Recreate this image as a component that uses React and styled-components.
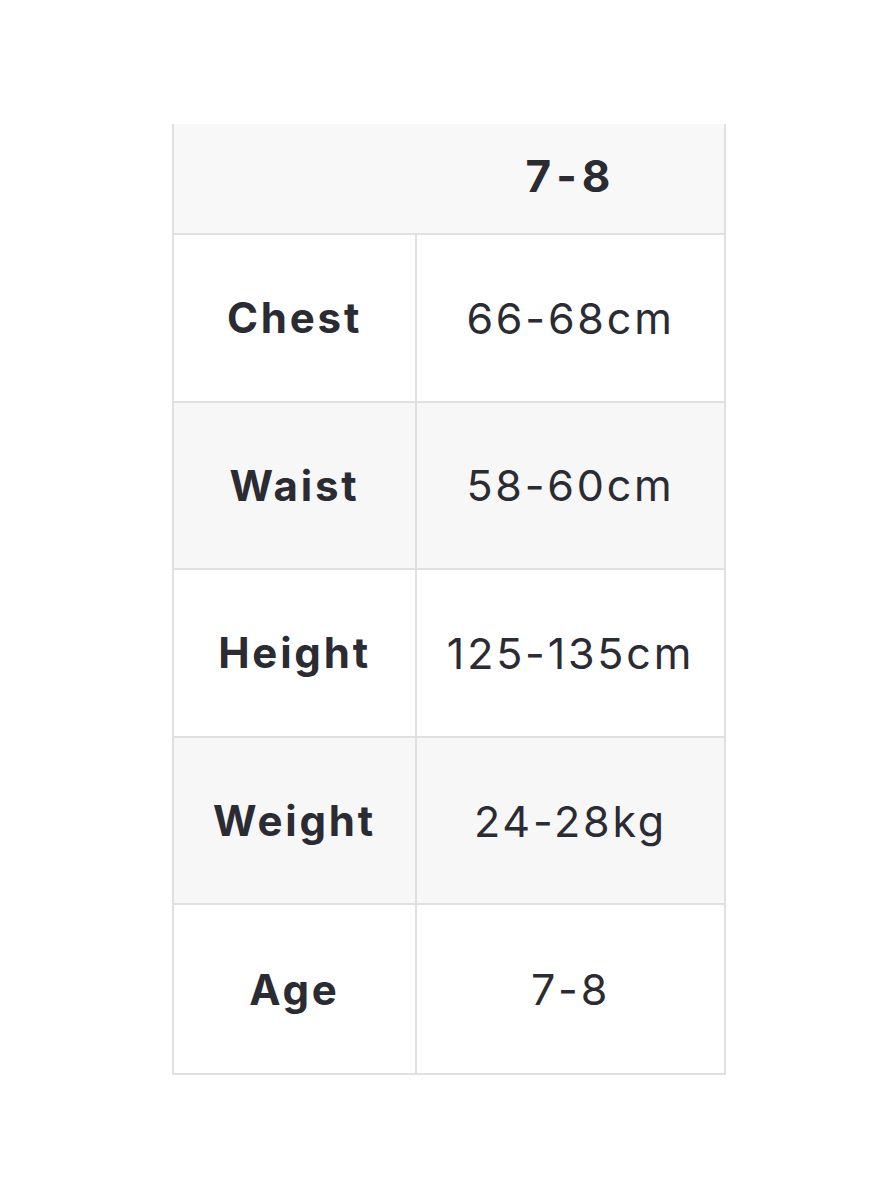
import React from "react";
import styled, { createGlobalStyle } from "styled-components";

const GlobalStyle = createGlobalStyle`
  body {
    margin: 0;
    background: #ffffff;
    font-family: Inter, "Noto Sans", sans-serif;
    color: #2b2b33;
  }
`;

const Page = styled.div`
  width: 889px;
  height: 1200px;
  padding-top: 124px;
  box-sizing: border-box;
`;

const Table = styled.div`
  margin-left: 172px;
  width: 554px;
  display: grid;
  grid-template-columns: 243px 1fr;
  border-left: 2px solid #e0e0e0;
  border-right: 2px solid #e0e0e0;
  border-bottom: 2px solid #e0e0e0;
  box-sizing: border-box;
`;

const HeaderCell = styled.div`
  height: 111px;
  display: flex;
  align-items: center;
  justify-content: center;
  background: #f8f8f8;
  font-size: 44px;
  font-weight: 700;
  letter-spacing: 5px;
  color: #2b2b33;
  border-bottom: 2px solid #e0e0e0;
  box-sizing: border-box;
  padding-bottom: 6px;
`;

const Cell = styled.div`
  height: 167.6px;
  display: flex;
  align-items: center;
  justify-content: center;
  background: ${p => (p.shaded ? "#f7f7f7" : "#ffffff")};
  border-bottom: ${p => (p.last ? "none" : "2px solid #e0e0e0")};
  border-right: ${p => (p.label ? "2px solid #e0e0e0" : "none")};
  box-sizing: border-box;
  font-size: ${p => (p.label ? "42px" : "43px")};
  font-weight: ${p => (p.label ? 700 : 400)};
  letter-spacing: ${p => (p.label ? "2.8px" : "2.8px")};
  color: #2b2b33;
`;

const rows = [
  { label: "Chest", value: "66-68cm" },
  { label: "Waist", value: "58-60cm" },
  { label: "Height", value: "125-135cm" },
  { label: "Weight", value: "24-28kg" },
  { label: "Age", value: "7-8" }
];

export default function App() {
  return (
    <Page>
      <GlobalStyle />
      <Table>
        <HeaderCell />
        <HeaderCell>7-8</HeaderCell>
        {rows.map(({ label, value }, i) => (
          <React.Fragment key={label}>
            <Cell label shaded={i % 2 === 1} last={i === rows.length - 1}>
              {label}
            </Cell>
            <Cell shaded={i % 2 === 1} last={i === rows.length - 1}>
              {value}
            </Cell>
          </React.Fragment>
        ))}
      </Table>
    </Page>
  );
}
